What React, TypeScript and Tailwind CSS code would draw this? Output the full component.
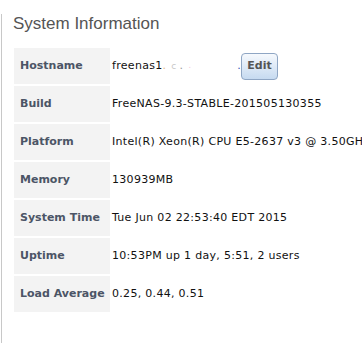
const rows: [string, string][] = [
  ["Build", "FreeNAS-9.3-STABLE-201505130355"],
  ["Platform", "Intel(R) Xeon(R) CPU E5-2637 v3 @ 3.50GHz"],
  ["Memory", "130939MB"],
  ["System Time", "Tue Jun 02 22:53:40 EDT 2015"],
  ["Uptime", "10:53PM up 1 day, 5:51, 2 users"],
  ["Load Average", "0.25, 0.44, 0.51"],
];

const labelCls =
  "h-[36px] w-[96px] min-w-[96px] bg-[#f3f3f3] pl-[6px] pr-0 text-left align-middle font-bold text-[#4c5566]";

export default function App() {
  return (
    <div className="h-[343px] w-[362px] overflow-hidden bg-white">
      <div className="ml-px h-full border-l border-[#c8c8c8] pl-[11px]">
        <h1 className="mt-[14px] whitespace-nowrap font-['Liberation_Sans',Arial,sans-serif] text-[17px] leading-[20px] text-[#555555]">
          System Information
        </h1>
        <table className="-ml-[1px] mt-[12px] w-max border-separate border-spacing-[2px] whitespace-nowrap font-['DejaVu_Sans',Verdana,sans-serif] text-[11px] leading-[14px] text-[#111111]">
          <tbody>
            <tr>
              <th className={labelCls}>Hostname</th>
              <td className="h-[36px] p-0 align-middle tracking-[0.3px]">
                <div className="flex items-center">
                  <div className="flex w-[129px] items-center">
                    <span>freenas1</span>
                    <span className="text-[#e8b98a]">.</span>
                    <span className="ml-[5px] text-[9px] text-[#c8c8c8]">c</span>
                    <span className="ml-[3px] text-[#9a9a9a]">.</span>
                    <span className="ml-[5px] text-[8px] text-[#f2c7d8]">.</span>
                    <span className="ml-[46px] text-[#3b5bb5]">.</span>
                  </div>
                  <button className="h-[27px] w-[37px] rounded-[4px] border border-[#8fa6c4] bg-gradient-to-b from-[#f6f9fd] to-[#c6daf0] font-bold text-[11px] tracking-normal text-[#555555]">
                    Edit
                  </button>
                </div>
              </td>
            </tr>
            {rows.map(([k, v]) => (
              <tr key={k}>
                <th className={labelCls}>{k}</th>
                <td className="h-[36px] p-0 align-middle tracking-[0.3px]">{v}</td>
              </tr>
            ))}
          </tbody>
        </table>
      </div>
    </div>
  );
}
